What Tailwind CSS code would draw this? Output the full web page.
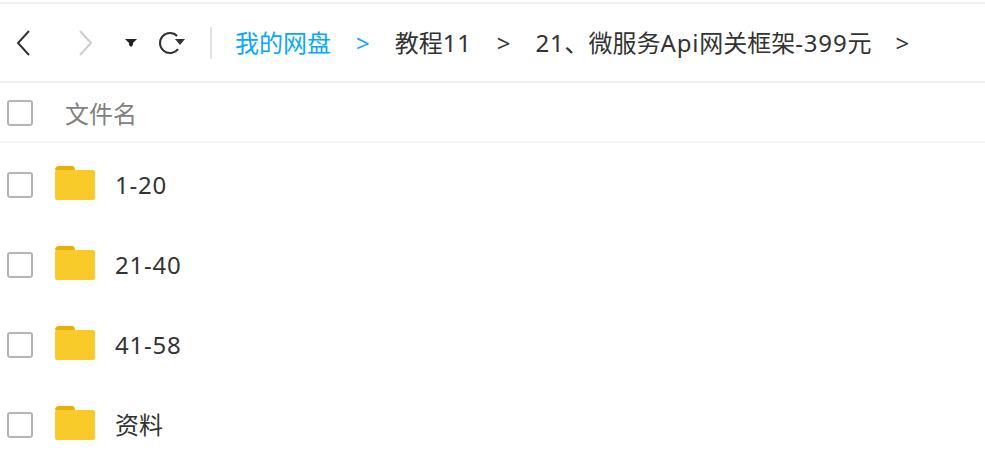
<!DOCTYPE html>
<html lang="zh">
<head>
<meta charset="utf-8">
<script src="https://cdn.jsdelivr.net/npm/@tailwindcss/browser@4"></script>
</head>
<body class="bg-white overflow-hidden font-['Noto_Sans','Noto_Sans_CJK_SC',sans-serif] text-[24px] leading-[32px] text-[#333]">
<div class="w-[985px] h-[463px] overflow-hidden flex flex-col">
  <div class="h-[2px] bg-white"></div>
  <div class="h-[2px] bg-[#f0f0f0]"></div>
  <header class="h-[78px] flex items-center">
    <svg class="w-[14px] h-[26px] ml-[16px]" viewBox="0 0 14 26" fill="none" stroke="#333" stroke-width="2"><path d="M13 1 L2 13 L13 25"/></svg>
    <svg class="w-[14px] h-[26px] ml-[49px]" viewBox="0 0 14 26" fill="none" stroke="#ccc" stroke-width="2"><path d="M1 1 L12 13 L1 25"/></svg>
    <svg class="w-[12px] h-[8px] ml-[32px]" viewBox="0 0 12 8" fill="#222"><path d="M0 0 H12 L8 4 V6 L6 8 L4 6 V4 Z"/></svg>
    <svg class="w-[27px] h-[24px] ml-[21px]" viewBox="0 0 27 24" fill="none"><path d="M19.1 5 A10 10 0 1 0 20 18" stroke="#333" stroke-width="2"/><path d="M17 8 H27 L22 14 Z" fill="#333"/></svg>
    <div class="w-[2px] h-[32px] bg-[#e2e2e2] ml-[25px]"></div>
    <nav class="flex items-center ml-[23px] whitespace-nowrap">
      <span class="text-[#06a7ff]">我的网盘</span>
      <span class="ml-[25px] text-[#06a7ff]">&gt;</span>
      <span class="ml-[25px]">教程<span class="tracking-[0.8px]">11</span></span>
      <span class="ml-[25px]">&gt;</span>
      <span class="ml-[25px]"><span class="tracking-[0.8px]">21</span>、微服务<span class="tracking-[0.8px]">Api</span>网关框架<span class="tracking-[0.8px]">-399</span>元</span>
      <span class="ml-[24px]">&gt;</span>
    </nav>
  </header>
  <div class="h-[2px] bg-[#f0f0f0]"></div>
  <div class="h-[58px] flex items-center pl-[7px]">
    <div class="w-[26px] h-[26px] mt-[2px] border-2 border-[#b5b5b5] rounded-[3px]"></div>
    <span class="ml-[32px] pt-[4px] text-[#818181]">文件名</span>
  </div>
  <div class="h-[2px] bg-[#f5f5f5]"></div>
  <ul class="flex flex-col">
    <li class="h-[80px] flex items-center pl-[7px]">
      <div class="w-[26px] h-[26px] mt-[4px] border-2 border-[#b5b5b5] rounded-[3px]"></div>
      <svg class="w-[40px] h-[34px] ml-[22px]" viewBox="0 0 40 34"><path d="M0 4 Q0 0 4 0 H17 Q20 0 20 4 H2 Z" fill="#e8b004"/><path d="M0 6 Q0 4 2 4 H38 Q40 4 40 6 V32 Q40 34 38 34 H2 Q0 34 0 32 Z" fill="#f9cb2a"/></svg>
      <span class="ml-[20px] pt-[4px] tracking-[0.8px]">1-20</span>
    </li>
    <li class="h-[80px] flex items-center pl-[7px]">
      <div class="w-[26px] h-[26px] mt-[4px] border-2 border-[#b5b5b5] rounded-[3px]"></div>
      <svg class="w-[40px] h-[34px] ml-[22px]" viewBox="0 0 40 34"><path d="M0 4 Q0 0 4 0 H17 Q20 0 20 4 H2 Z" fill="#e8b004"/><path d="M0 6 Q0 4 2 4 H38 Q40 4 40 6 V32 Q40 34 38 34 H2 Q0 34 0 32 Z" fill="#f9cb2a"/></svg>
      <span class="ml-[20px] pt-[4px] tracking-[0.8px]">21-40</span>
    </li>
    <li class="h-[80px] flex items-center pl-[7px]">
      <div class="w-[26px] h-[26px] mt-[4px] border-2 border-[#b5b5b5] rounded-[3px]"></div>
      <svg class="w-[40px] h-[34px] ml-[22px]" viewBox="0 0 40 34"><path d="M0 4 Q0 0 4 0 H17 Q20 0 20 4 H2 Z" fill="#e8b004"/><path d="M0 6 Q0 4 2 4 H38 Q40 4 40 6 V32 Q40 34 38 34 H2 Q0 34 0 32 Z" fill="#f9cb2a"/></svg>
      <span class="ml-[20px] pt-[4px] tracking-[0.8px]">41-58</span>
    </li>
    <li class="h-[80px] flex items-center pl-[7px]">
      <div class="w-[26px] h-[26px] mt-[4px] border-2 border-[#b5b5b5] rounded-[3px]"></div>
      <svg class="w-[40px] h-[34px] ml-[22px]" viewBox="0 0 40 34"><path d="M0 4 Q0 0 4 0 H17 Q20 0 20 4 H2 Z" fill="#e8b004"/><path d="M0 6 Q0 4 2 4 H38 Q40 4 40 6 V32 Q40 34 38 34 H2 Q0 34 0 32 Z" fill="#f9cb2a"/></svg>
      <span class="ml-[20px] pt-[4px]">资料</span>
    </li>
  </ul>
</div>
</body>
</html>
